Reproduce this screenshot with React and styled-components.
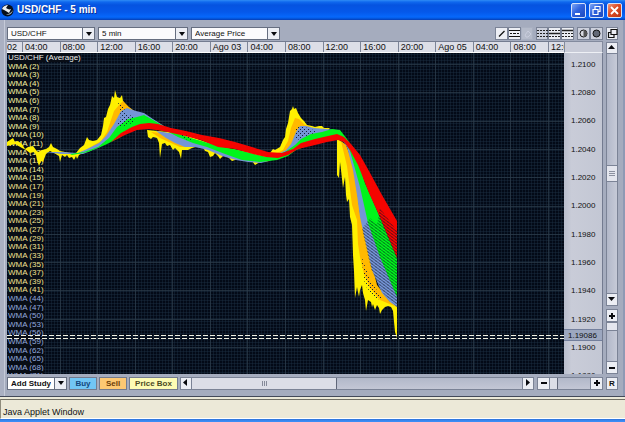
import React from "react";
import styled, { createGlobalStyle } from "styled-components";

const GlobalStyle = createGlobalStyle`
  *, *::before, *::after { box-sizing: border-box; }
  body { margin: 0; background: #ece9d8; font-family: "Liberation Sans", Arial, sans-serif; font-size: 8px; color: #111; }
  button, select { font: inherit; color: inherit; margin: 0; padding: 0; border-radius: 0; }
  svg { display: block; }
`;

const Window = styled.div`
  display: flex;
  flex-direction: column;
`;

const TitleBar = styled.header`
  display: flex;
  align-items: center;
  height: 20px;
  padding: 0 3px 0 1px;
  gap: 3px;
  background: linear-gradient(#2f8cf5 0, #0f68ee 2px, #0553e0 5px, #0558ea 12px, #0668fb 17px, #0350d2 19px, #0a3bb0 20px);
`;

const Title = styled.h1`
  flex: 1;
  margin: 0;
  font: bold 10px/18px "Liberation Sans", Arial, sans-serif;
  color: #fff;
  text-shadow: 1px 1px 0 #0a2f90;
`;

const CaptionButton = styled.button`
  width: 15px;
  height: 15px;
  border: 1px solid #d5e2fb;
  border-radius: 2px;
  background: ${(p) => (p.$close ? "linear-gradient(135deg, #f09a80, #dd4b25 45%, #b93512)" : "linear-gradient(135deg, #7fa6f5, #2f63df 45%, #1c48bd)")};
  svg { width: 13px; height: 13px; }
`;

const Applet = styled.main`
  display: flex;
  flex-direction: column;
  padding: 7px 7px 7px;
  background: #a5acbe;
  border-bottom: 1px solid #434959;
  box-shadow: inset 4px 0 0 #aab0c2, inset 5px 0 0 #c5cad8, inset -2px 0 0 #8f9ab4;
`;

const Toolbar = styled.div`
  display: flex;
  align-items: stretch;
  height: 13px;
  margin-bottom: 1px;
  gap: 3px;
`;

const SelectFrame = styled.label`
  display: flex;
  width: ${(p) => p.$width}px;
  height: 13px;
  background: #fdfdfe;
  border: 1px solid #666e80;
`;

const SelectInput = styled.select`
  flex: 1;
  min-width: 0;
  appearance: none;
  border: 0;
  outline: 0;
  padding: 0 3px;
  background: ${(p) => (p.$plain ? "#fff" : "#fbfbfd")};
  line-height: 11px;
  font-weight: ${(p) => (p.$plain ? "bold" : "normal")};
`;

const ArrowCell = styled.span`
  display: grid;
  place-items: center;
  width: 12px;
  border-left: 1px solid #666e80;
  background: #eceef4;
  pointer-events: none;
`;

const Spacer = styled.span`
  flex: 1;
`;

const ButtonGroup = styled.div`
  display: flex;
`;

const ToolButton = styled.button`
  display: grid;
  place-items: center;
  width: ${(p) => (p.$narrow ? 12 : 13)}px;
  height: ${(p) => (p.$short ? 12 : 13)}px;
  border: 1px solid #7b8396;
  background: ${(p) => (p.disabled ? "#b5bbca" : p.$pressed ? "#ccd0dc" : "#eceef4")};
  border-color: ${(p) => (p.disabled ? "#a9b0c1" : "#7b8396")};
  color: #111;
  font-weight: bold;
  flex: none;
`;

const Workspace = styled.div`
  display: grid;
  grid-template-columns: minmax(0, 1fr) 12px;
  gap: 3px;
`;

const ChartFrame = styled.section`
  display: grid;
  grid-template-columns: minmax(0, 1fr) 39px;
  grid-template-rows: 12px auto;
`;

const TimeAxis = styled.div`
  display: grid;
  grid-template-columns: 15px repeat(14, 1fr) 16px;
  overflow: hidden;
  background: #dcdee7;
  border-top: 1px solid #747c90;
  border-bottom: 1px solid #fff;
  font-size: 9px;
  line-height: 11px;
`;

const TimeTick = styled.span`
  min-width: 0;
  overflow: hidden;
  white-space: nowrap;
  padding-left: ${(p) => (p.$first ? 0 : 2)}px;
  border-left: ${(p) => (p.$first ? 0 : 1)}px solid #7d8598;
`;

const AxisCorner = styled.div`
  background: #c9ccd8;
  border: solid #838b9e;
  border-width: 1px 1px 0;
  border-bottom: 1px solid #eef0f5;
`;

const Plot = styled.div`
  position: relative;
  overflow: hidden;
  background: #030a17;
`;

const GridLayer = styled.svg`
  width: 100%;
  height: auto;
`;

const CurveLayer = styled.svg`
  position: absolute;
  inset: 0;
  width: 100%;
  height: 100%;
`;

const Legend = styled.ol`
  position: absolute;
  inset: 0 auto auto 0;
  height: 327px;
  display: grid;
  grid-template-rows: repeat(38, minmax(0, 1fr));
  justify-items: start;
  list-style: none;
  margin: 0;
  padding: 0 0 0 1px;
`;

const LegendItem = styled.li`
  line-height: 9px;
  color: ${(p) => p.$color};
  background: #080d16;
  white-space: nowrap;
`;

const PriceAxis = styled.div`
  position: relative;
  overflow: hidden;
  background: linear-gradient(90deg, #b9becd, #c9ccd8 20%, #c3c7d4);
  border-right: 1px solid #737b90;
`;

const PriceLabels = styled.div`
  display: grid;
  grid-template-rows: repeat(12, 1fr);
  height: 340px;
  margin: -3px 0 -16px;
  padding-left: 7px;
  align-items: center;
`;

const PriceTag = styled.output`
  position: absolute;
  left: 0;
  right: 0;
  top: 276px;
  height: 12px;
  padding-left: 4px;
  line-height: 12px;
  background: #9ca7bf;
  border: solid #737f9c;
  border-width: 1px 0;
`;

const SideColumn = styled.div`
  display: flex;
  flex-direction: column;
  gap: 3px;
  padding-top: 1px;
`;

const VerticalTrack = styled.div`
  display: flex;
  flex-direction: column;
  flex: ${(p) => (p.$grow ? 1 : "none")};
  height: ${(p) => (p.$grow ? "auto" : "65px")};
  border: solid #7b8396;
  border-width: 0 1px;
  background: linear-gradient(90deg, #b2b8c9, #c6cad7);
  > button { width: 12px; margin: 0 -1px; }
`;

const VerticalThumb = styled.span`
  display: grid;
  place-items: center;
  height: ${(p) => p.$size}px;
  background: #e4e6ee;
  border: solid #7b8396;
  border-width: 1px 0;
`;

const BottomBar = styled.div`
  display: flex;
  align-items: center;
  height: 12px;
  margin-top: 3px;
  gap: 2px;
`;

const OrderButton = styled.button`
  width: ${(p) => p.$width}px;
  height: 13px;
  line-height: 11px;
  border: 1px solid #737b8e;
  background: ${(p) => p.$fill};
  font-weight: bold;
  color: ${(p) => p.$ink};
  white-space: nowrap;
`;

const HorizontalTrack = styled.div`
  display: flex;
  height: 13px;
  flex: ${(p) => (p.$grow ? 1 : "none")};
  width: ${(p) => (p.$grow ? "auto" : "66px")};
  margin-right: 1px;
  border: solid #7b8396;
  border-width: 1px 0;
  background: linear-gradient(#b2b8c9, #c3c7d5);
  > button { margin: -1px 0; }
`;

const HorizontalThumb = styled.span`
  display: grid;
  place-items: center;
  flex: 0 0 ${(p) => p.$size};
  background: #dcdee7;
  border-right: 1px solid #606779;
`;

const TrackSpace = styled.span`
  flex: 1;
`;

const StatusBar = styled.footer`
  margin-top: 2px;
  height: 20px;
  padding: 5px 2px 0;
  background: #ece9d8;
  border-top: 1px solid #716f64;
  border-left: 1px solid #8f8c7c;
  border-bottom: 1px solid #fff;
  font-size: 9px;
  line-height: 14px;
`;

const TaskbarEdge = styled.div`
  height: 4px;
  background: linear-gradient(#2e72d8, #3b8cf5 2px);
`;

const arrows = {
  down: "M0 1h7L3.5 5z",
  up: "M0 5h7L3.5 1z",
  left: "M5 0v7L1 3.5z",
  right: "M2 0v7L6 3.5z",
  plus: "M3 1h2v2h2v2H5v2H3V5H1V3h2z",
  minus: "M1 3h6v2H1z",
};

function Glyph({ kind }) {
  return <svg width="8" height="8" viewBox="0 0 8 8" aria-hidden="true"><path d={arrows[kind]} fill="#090a0e" /></svg>;
}

function Picker({ label, value, width, plain }) {
  return (
    <SelectFrame $width={width}>
      <SelectInput aria-label={label} $plain={plain} defaultValue={value}><option>{value}</option></SelectInput>
      <ArrowCell><svg width="6" height="4" viewBox="0 0 6 4"><path d="M0 0h6L3 4z" fill="#090a0e" /></svg></ArrowCell>
    </SelectFrame>
  );
}

const toolIcons = {
  line: <path d="M3 8.5L8.5 3" stroke="#111" strokeWidth="1.3" />,
  levels: <path d="M0 2.5h11M0 8.5h11M1 5.5h2M4 5.5h3M8 5.5h2" stroke="#111" />,
  eraser: <path d="M3 7l3-4 3 3-3 3H4z" fill="none" stroke="#c9cddd" />,
  gridDots: <path d="M0 2.5h11M0 5.5h11M0 8.5h11" stroke="#222" strokeDasharray="2 1" />,
  gridLine: <g stroke="#222"><path d="M0 2.5h11M0 8.5h11" strokeDasharray="2 1" /><path d="M0 5.5h11" strokeWidth="1.5" /></g>,
  gridTop: <g stroke="#222"><path d="M0 2.5h11" strokeWidth="1.5" /><path d="M0 5.5h11M0 8.5h11" strokeDasharray="2 1" /></g>,
  contrast: <g><circle cx="5.5" cy="5.5" r="3.5" fill="#d9dbe2" stroke="#111" /><path d="M5.5 2a3.5 3.5 0 010 7z" fill="#555" /></g>,
  filled: <circle cx="5.5" cy="5.5" r="3.5" fill="#636976" stroke="#111" />,
  windows: <path d="M4 1.5h6v5H4zM4 4.5H1.5v5H7v-3" fill="none" stroke="#111" strokeWidth="1.2" />,
};

function Tool({ icon, label, ...rest }) {
  return <ToolButton aria-label={label} {...rest}><svg width="11" height="11" viewBox="0 0 11 11">{toolIcons[icon]}</svg></ToolButton>;
}

const times = ["02", "04:00", "08:00", "12:00", "16:00", "20:00", "Ago 03", "04:00", "08:00", "12:00", "16:00", "20:00", "Ago 05", "04:00", "08:00", "12:00"];
const prices = ["1.2100", "1.2080", "1.2060", "1.2040", "1.2020", "1.2000", "1.1980", "1.1960", "1.1940", "1.1920", "1.1900", "1.1880"];
const periods = [2, 3, 4, 5, 6, 7, 8, 9, 10, 11, 12, 13, 14, 15, 17, 19, 21, 23, 25, 27, 29, 31, 33, 35, 37, 39, 41, 44, 47, 50, 53, 56, 59, 62, 65, 68, 71];
const periodColor = (n) => (n > 41 ? "#93a9de" : n > 15 ? "#f3e193" : "#f6f3a4");

const bands = [
  ["#fff000", "7,142 10,140 13,138 15,142 18,141 22,144 25,149 28,147 33,146 36,150 38,152 42,150 46,149 49,147 51,143 53,147 57,149 60,151 65,152 70,153 76,153 80,148 84,145 87,137 89,140 93,141 97,140 101,135 103,126 104,118 106,117 108,109 110,105 112,96 114,98 115,90 117,97 120,98 122,95 123,101 128,107 133,111 118,125 108,138 100,144 90,150 81,154 79,155 77,159 76,156 74,160 72,157 69,158 67,155 65,157 62,155 60,162 59,156 54,153 50,151 46,154 43,162 41,161 39,166 37,160 36,155 34,152 30,153 26,150 22,148 15,144 7,146"],
  ["#fff000", "147,130 148,137 151,139 153,137 157,138 159,143 160,158 162,144 165,143 167,146 170,145 173,150 175,148 179,152 181,159 182,150 188,150 192,148 199,146 203,147 205,151 208,152 210,157 213,156 215,153 218,156 220,159 223,156 225,155 229,158 232,161 238,159 242,160 248,159 252,161 255,165 260,162 270,161 265,155 220,147 180,133"],
  ["#fff000", "270,153 273,149 275,150 280,147 283,140 285,137 286,129 288,123 290,111 292,109 293,106 294,109 296,108 298,113 301,118 304,121 307,125 312,126 315,127 319,126 322,126 324,128 330,128 325,133 305,136 291,148 283,153"],
  ["#fff000", "337,138 337,175 339,178 340,162 341,170 343,188 345,177 346,195 347,202 349,199 350,217 352,225 353,255 354,271 355,298 357,287 359,297 360,290 362,285 363,293 365,300 366,311 368,300 371,302 372,307 373,304 375,310 377,305 379,308 380,314 382,310 385,307 388,306 391,307 393,311 395,332 397,338 397,306 384,298 371,280 361,230 355,188 344,144"],
  ["#ffb900", "84,151 94,145 101,141 107,132 114,111 119,105 123,101 129,107 137,113 121,128 110,138 98,147 85,152"],
  ["#ffb900", "151,132 160,138 171,143 180,147 194,147 202,147 218,153 235,159 246,160 227,151 196,142 171,134"],
  ["#ffb900", "275,154 283,150 288,141 291,128 295,118 299,119 305,125 311,127 301,136 290,148 282,153"],
  ["#ffb900", "341,141 347,166 352,205 357,220 358,244 360,257 364,274 370,288 380,300 392,305 397,307 390,302 377,285 367,245 360,213 354,166 346,145"],
  ["#7595d6", "45,152 62,152 78,153 87,149 99,143 106,136 114,124 121,111 127,108 136,111 144,113 153,119 164,126 151,127 132,127 115,137 100,147 83,154 62,154"],
  ["#7595d6", "156,131 166,138 175,143 185,147 195,147 208,150 222,156 236,160 248,162 261,163 272,160 254,158 226,151 200,141 176,134"],
  ["#7595d6", "278,154 286,150 291,144 296,132 300,126 306,126 314,128 326,129 336,130 325,137 303,143 289,151"],
  ["#7595d6", "340,137 347,147 353,170 357,195 360,217 365,240 372,270 382,293 390,302 397,307 397,296 380,256 369,223 360,183 350,149"],
  ["#00f51b", "70,154 84,152 98,147 109,138 117,127 128,119 137,117 144,115 153,120 165,127 178,132 162,131 147,126 133,129 119,138 105,145 88,152 72,155"],
  ["#00f51b", "161,128 178,137 193,143 207,147 225,154 242,160 260,162 277,160 288,156 296,150 310,145 328,137 343,138 350,151 360,187 368,223 380,257 397,297 397,258 379,215 365,183 355,151 347,139 340,130 332,129 322,132 311,134 301,139 295,145 285,152 267,157 242,151 219,146 194,139"],
  ["#f50400", "111,142 121,133 132,127 140,124 149,123 158,124 171,128 186,131 202,135 219,138 235,142 252,147 268,152 282,153 293,149 301,143 315,139 328,136 337,134 344,137 351,144 360,155 369,171 382,195 397,221 397,258 379,215 369,193 358,165 350,150 344,142 338,140 327,142 311,146 298,149 288,155 278,158 266,157 253,154 235,149 218,147 201,140 181,135 163,131 149,129 137,130 125,135"],
];

const verticals = Array.from({ length: 15 }, (_, i) => Math.round(22 + i * 37.57));
const horizontals = prices.slice(0, 11).map((_, i) => Math.round(64 + i * 28.3));

function ChartGrid() {
  return (
    <GridLayer viewBox="7 53 557 321" aria-hidden="true">
      <defs>
        <pattern id="minor" width="3" height="3" patternUnits="userSpaceOnUse"><path d="M0 .5h3M.5 0v3" stroke="#1e3345" strokeOpacity=".4" /></pattern>
      </defs>
      <path d="M7 53h557v321H7z" fill="url(#minor)" />
      <g stroke="#2c3c4b" strokeOpacity=".75">
        {verticals.map((x) => <path key={x} d={`M${x}.5 53v321`} />)}
        {horizontals.map((y) => <path key={y} d={`M7 ${y}.5h557`} />)}
      </g>
    </GridLayer>
  );
}

function ChartCurves() {
  return (
    <CurveLayer viewBox="7 53 557 321" role="img" aria-label="USD/CHF weighted moving averages">
      <defs>
        <pattern id="hatch" width="4" height="3" patternUnits="userSpaceOnUse"><path d="M0 0l4 3M-1 2l2 1.5M3 -.5l2 1.5" stroke="#071022" strokeWidth=".8" /></pattern>
        <pattern id="specks" width="4" height="4" patternUnits="userSpaceOnUse"><path d="M0 1h1v1H0zM2 3h1v1H2z" fill="#142137" /></pattern>
      </defs>
      {bands.map(([fill, points]) => <polygon key={points} points={points} fill={fill} />)}
      <path d="M118 102l6 3 1 9 8 2 2 6-14 5-5-4 5-6z" fill="url(#specks)" />
      <path d="M296 128l5-2 10 3 6 3-16 6-5 3z" fill="url(#specks)" />
      <path d="M177 133l11 3 5 4-10-1zM361 255l9 25 12 18-6 2-11-15z" fill="url(#specks)" />
      <path d="M380 208l17 23v76l-14-14-12-24-9-40 8-11 7 6z" fill="url(#hatch)" opacity=".7" />
      <path d="M7 335.5h557M7 338.5h557" stroke="#f1f2e3" strokeDasharray="5 2" />
    </CurveLayer>
  );
}

export default function App() {
  return (
    <Window>
      <GlobalStyle />
      <TitleBar>
        <svg width="13" height="13" viewBox="0 0 13 13" aria-hidden="true">
          <circle cx="6.5" cy="6.5" r="6" fill="#07101c" />
          <path d="M1 5C2 2 5 1 7 1L5 4c2 1 3 2 5 1L8 9C6 8 4 6 1 5z" fill="#e9edf0" />
          <path d="M4 10c3 1 6-1 8-4-1 4-4 6-8 4z" fill="#aebbc2" />
        </svg>
        <Title>USD/CHF - 5 min</Title>
        <CaptionButton aria-label="Minimize"><svg viewBox="0 0 13 13"><path d="M3 9h5v2H3z" fill="#fff" /></svg></CaptionButton>
        <CaptionButton aria-label="Restore"><svg viewBox="0 0 13 13"><path d="M5 5V2.5h5v5H8M3 5.5h5v5H3z" fill="none" stroke="#fff" strokeWidth="1.2" /></svg></CaptionButton>
        <CaptionButton $close aria-label="Close"><svg viewBox="0 0 13 13"><path d="M3 3l7 7M10 3l-7 7" stroke="#fff" strokeWidth="1.8" /></svg></CaptionButton>
      </TitleBar>
      <Applet>
        <Toolbar>
          <Picker label="Currency pair" value="USD/CHF" width={88} />
          <Picker label="Interval" value="5 min" width={90} />
          <Picker label="Price type" value="Average Price" width={89} />
          <Spacer />
          <ButtonGroup>
            <Tool icon="line" label="Draw line" />
            <Tool icon="levels" label="Draw levels" />
            <Tool icon="eraser" label="Erase drawing" $narrow disabled />
          </ButtonGroup>
          <ButtonGroup>
            <Tool icon="gridDots" label="Dotted grid" $pressed $narrow />
            <Tool icon="gridLine" label="Center line" />
            <Tool icon="gridTop" label="Top line" />
          </ButtonGroup>
          <ButtonGroup>
            <Tool icon="contrast" label="Contrast" $pressed />
            <Tool icon="filled" label="Fill" $pressed />
          </ButtonGroup>
          <Tool icon="windows" label="Detach chart" $narrow />
        </Toolbar>
        <Workspace>
          <ChartFrame>
            <TimeAxis>{times.map((t, i) => <TimeTick key={i} $first={i === 0}>{t}</TimeTick>)}</TimeAxis>
            <AxisCorner />
            <Plot>
              <ChartGrid />
              <Legend>
                <LegendItem $color="#eceeea">USD/CHF (Average)</LegendItem>
                {periods.map((n) => <LegendItem key={n} $color={periodColor(n)}>WMA ({n})</LegendItem>)}
              </Legend>
              <ChartCurves />
            </Plot>
            <PriceAxis>
              <PriceLabels>{prices.map((p) => <span key={p}>{p}</span>)}</PriceLabels>
              <PriceTag>1.19086</PriceTag>
            </PriceAxis>
          </ChartFrame>
          <SideColumn>
            <VerticalTrack $grow>
              <ToolButton $short aria-label="Scroll up"><Glyph kind="up" /></ToolButton>
              <TrackSpace />
              <VerticalThumb $size={17}><svg width="6" height="6"><path d="M0 .5h6M0 2.5h6M0 4.5h6" stroke="#8c91a0" /></svg></VerticalThumb>
              <TrackSpace />
              <ToolButton aria-label="Scroll down"><Glyph kind="down" /></ToolButton>
            </VerticalTrack>
            <VerticalTrack>
              <ToolButton aria-label="Zoom price in"><Glyph kind="plus" /></ToolButton>
              <VerticalThumb $size={9} />
              <TrackSpace />
              <ToolButton aria-label="Zoom price out"><Glyph kind="minus" /></ToolButton>
            </VerticalTrack>
          </SideColumn>
        </Workspace>
        <BottomBar>
          <Picker label="Add study" value="Add Study" width={60} plain />
          <OrderButton $width={28} $fill="#72c6f5" $ink="#14467d">Buy</OrderButton>
          <OrderButton $width={28} $fill="#fdc873" $ink="#6b3c08">Sell</OrderButton>
          <OrderButton $width={49} $fill="#fdfbb4" $ink="#4b4a24">Price Box</OrderButton>
          <HorizontalTrack $grow>
            <ToolButton $narrow aria-label="Scroll left"><Glyph kind="left" /></ToolButton>
            <HorizontalThumb $size="41%"><svg width="5" height="5"><path d="M.5 0v5M2.5 0v5M4.5 0v5" stroke="#858a99" /></svg></HorizontalThumb>
            <TrackSpace />
            <ToolButton $narrow aria-label="Scroll right"><Glyph kind="right" /></ToolButton>
          </HorizontalTrack>
          <HorizontalTrack>
            <ToolButton aria-label="Zoom time out"><Glyph kind="minus" /></ToolButton>
            <HorizontalThumb $size="8px" />
            <TrackSpace />
            <ToolButton aria-label="Zoom time in"><Glyph kind="plus" /></ToolButton>
          </HorizontalTrack>
          <ToolButton $narrow aria-label="Reset view">R</ToolButton>
        </BottomBar>
      </Applet>
      <StatusBar>Java Applet Window</StatusBar>
      <TaskbarEdge />
    </Window>
  );
}
